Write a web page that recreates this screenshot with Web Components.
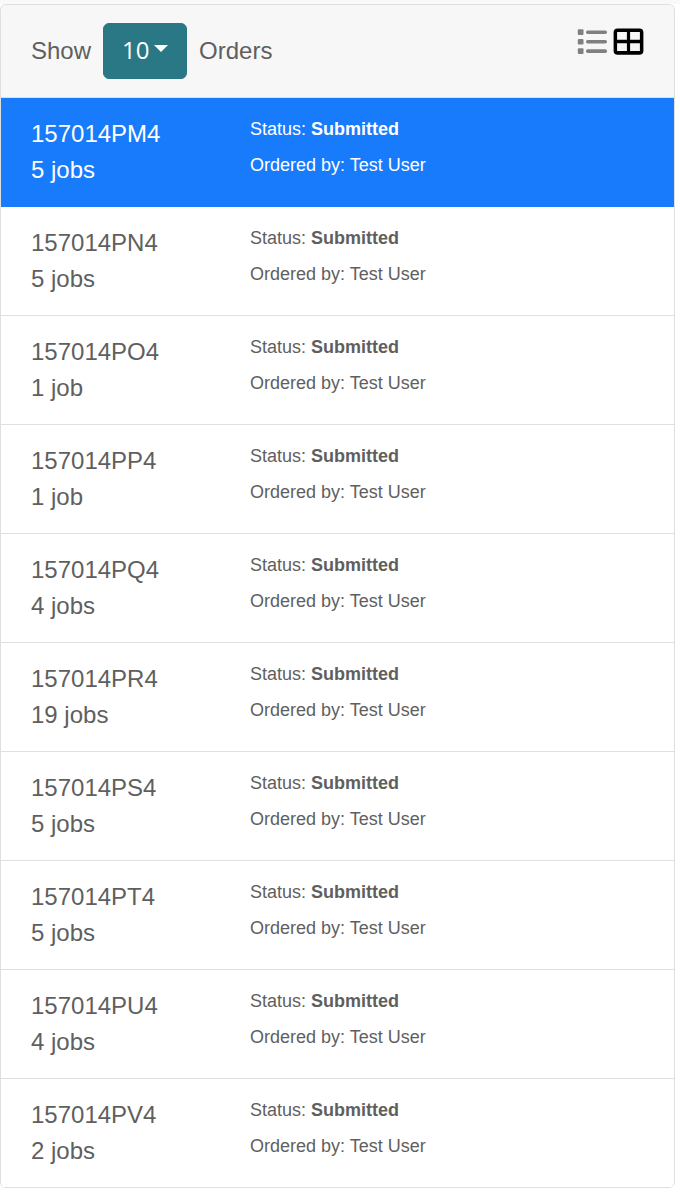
<!DOCTYPE html>
<html lang="en">
<head>
<meta charset="utf-8">
<title>Orders</title>
<style>
body {
  margin: 0;
  padding: 0 5px 4px 0;
  border-top: 4px solid #f8f9fa;
  background: #fff;
  color: #5f5f5f;
  font: 24px/36px "Liberation Sans", Arial, sans-serif;
}
</style>
</head>
<body>
<order-card>
  <page-size slot="header"></page-size>
  <view-switch slot="header"></view-switch>
  <order-row number="157014PM4" jobs="5" active></order-row>
  <order-row number="157014PN4" jobs="5"></order-row>
  <order-row number="157014PO4" jobs="1"></order-row>
  <order-row number="157014PP4" jobs="1"></order-row>
  <order-row number="157014PQ4" jobs="4"></order-row>
  <order-row number="157014PR4" jobs="19"></order-row>
  <order-row number="157014PS4" jobs="5"></order-row>
  <order-row number="157014PT4" jobs="5"></order-row>
  <order-row number="157014PU4" jobs="4"></order-row>
  <order-row number="157014PV4" jobs="2"></order-row>
</order-card>

<script>
class OrderCard extends HTMLElement {
  constructor() {
    super();
    this.attachShadow({ mode: "open" }).innerHTML = `
      <style>
        :host { display: block; border: 1px solid #dfdfdf; border-bottom: 0; border-radius: 6px; overflow: hidden; background: #fff; }
        header { display: flex; justify-content: space-between; align-items: flex-start; padding: 18px 30px; background: #f7f7f7; border-bottom: 1px solid #dfdfdf; }
      </style>
      <header><slot name="header"></slot></header>
      <main><slot></slot></main>`;
  }
}

class PageSize extends HTMLElement {
  constructor() {
    super();
    this.attachShadow({ mode: "open" }).innerHTML = `
      <style>
        :host { display: block; }
        label { display: flex; align-items: center; gap: 12px; }
        .box { position: relative; display: flex; }
        select { appearance: none; width: 84px; height: 56px; margin: 0; padding: 0 18px 2px; border: 1px solid #2a7886; border-radius: 6px; background: #2a7886; color: #fff; font: 24px/36px "Open Sans", sans-serif; cursor: pointer; }
        svg { position: absolute; right: 19px; top: 22px; width: 14px; height: 7px; fill: #fff; pointer-events: none; }
      </style>
      <label><span>Show</span>
        <span class="box">
          <select aria-label="Orders per page"><option>10</option><option>25</option><option>50</option></select>
          <svg viewBox="0 0 14 7" aria-hidden="true"><path d="M0 0h14L7 7z"/></svg>
        </span>
        <span>Orders</span></label>`;
  }
}

class ViewSwitch extends HTMLElement {
  constructor() {
    super();
    this.attachShadow({ mode: "open" }).innerHTML = `
      <style>
        :host { display: flex; gap: 6px; }
        button { display: flex; align-items: center; height: 36px; margin: 0; padding: 0; border: 0; background: none; color: #000; cursor: pointer; }
        .off { color: #808080; }
        svg { display: block; height: 28px; fill: currentColor; }
      </style>
      <button class="off" type="button" aria-label="List view">
        <svg width="30" height="28" viewBox="0 0 30 28"><rect x=".8" y="2.200" width="5.7" height="5.7" rx="1"/><rect x=".8" y="11.9" width="5.7" height="5.7" rx="1"/><rect x=".8" y="21.300" width="5.7" height="5.7" rx="1"/><rect x="9" y="3.400" width="21" height="3.6" rx="1.7"/><rect x="9" y="12.9" width="21" height="3.6" rx="1.7"/><rect x="9" y="22.300" width="21" height="3.6" rx="1.7"/></svg>
      </button>
      <button type="button" aria-label="Table view" aria-pressed="true">
        <svg width="31" height="28" viewBox="0 0 31 28"><path fill-rule="evenodd" d="M4.600 1.500h21.800a4 4 0 0 1 4 4v18.300a4 4 0 0 1-4 4H4.600a4 4 0 0 1-4-4V5.500a4 4 0 0 1 4-4zM4.100 5v7.800h9.800V5zM17.100 5v7.800h9.800V5zM4.100 16.200v7.900h9.800v-7.900zM17.100 16.200v7.900h9.800v-7.900z"/></svg>
      </button>`;
  }
}

class OrderRow extends HTMLElement {
  constructor() {
    super();
    const jobs = this.getAttribute("jobs");
    this.attachShadow({ mode: "open" }).innerHTML = `
      <style>
        :host { display: block; border-bottom: 1px solid #dfdfdf; }
        :host([active]) { background: #187bfc; border-color: #187bfc; color: #fff; }
        a { display: grid; grid-template-columns: 1fr 2fr; column-gap: 22px; padding: 18px 30px; color: inherit; text-decoration: none; }
        .number, .jobs { display: block; }
        .details { display: flex; flex-direction: column; gap: 9px; font-size: 18px; line-height: 27px; }
      </style>
      <a href="#${this.getAttribute("number")}">
        <span><span class="number">${this.getAttribute("number")}</span><span class="jobs">${jobs} ${jobs === "1" ? "job" : "jobs"}</span></span>
        <span class="details"><span>Status: <b>Submitted</b></span><span>Ordered by: Test User</span></span>
      </a>`;
  }
}

customElements.define("order-card", OrderCard);
customElements.define("page-size", PageSize);
customElements.define("view-switch", ViewSwitch);
customElements.define("order-row", OrderRow);
</script>
</body>
</html>
